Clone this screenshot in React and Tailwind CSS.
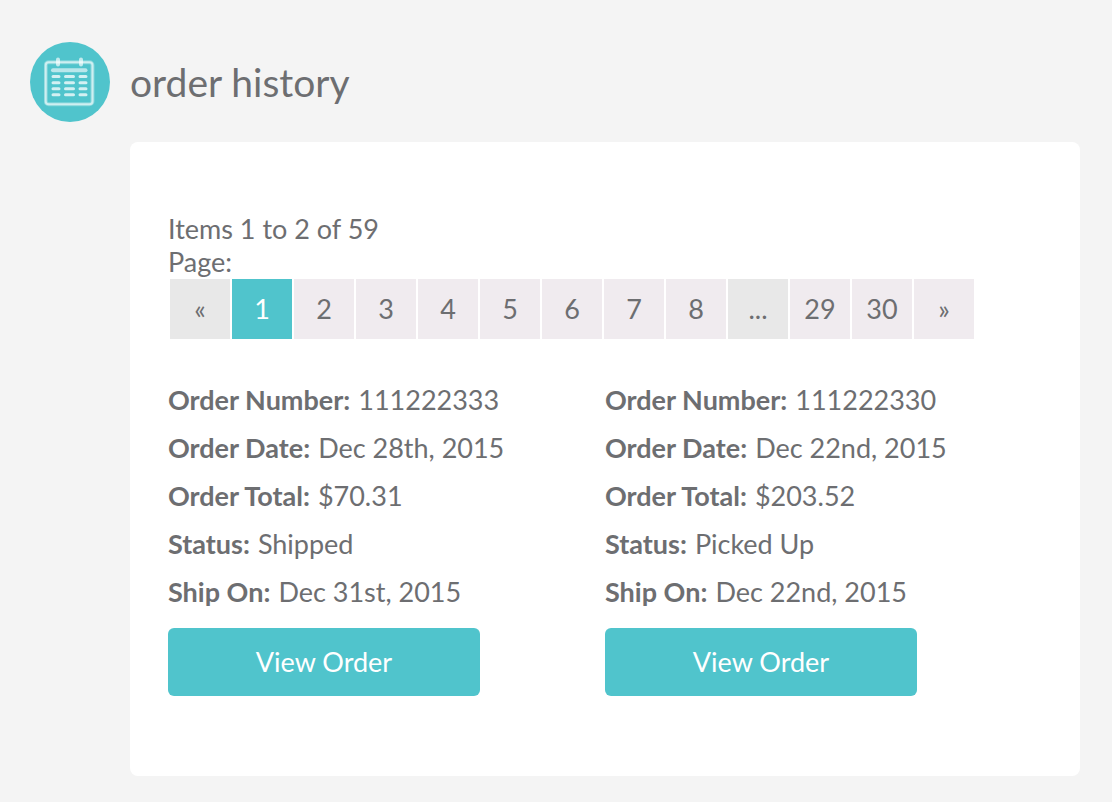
const pages = ["«", "1", "2", "3", "4", "5", "6", "7", "8", "...", "29", "30", "»"];

const orders = [
  {
    number: "111222333",
    date: "Dec 28th, 2015",
    total: "$70.31",
    status: "Shipped",
    shipOn: "Dec 31st, 2015",
  },
  {
    number: "111222330",
    date: "Dec 22nd, 2015",
    total: "$203.52",
    status: "Picked Up",
    shipOn: "Dec 22nd, 2015",
  },
];

const CalendarIcon = () => (
  <svg width="52" height="52" viewBox="0 0 52 52" fill="none" stroke="#ffffff" aria-hidden="true">
    <rect x="1.7" y="6.3" width="46.800" height="42" rx="3" strokeWidth="4" strokeOpacity="0.3" />
    <rect x="1.7" y="6.3" width="46.800" height="42" rx="3" strokeWidth="2" strokeOpacity="0.6" />
    <g strokeLinecap="round">
      <path d="M14 3.500v5M37 3.500v5" strokeWidth="4" strokeOpacity="0.65" />
      <path d="M9 14.300h32.500" strokeWidth="4" strokeOpacity="0.6" />
      <path
        d="M9 20.500h6M21.500 20.500h8M36 20.500h6M9 26.700h6M21.500 26.700h8M36 26.700h6M9 32.700h6M21.500 32.700h8M36 32.700h6M9 38.700h6M21.500 38.700h8M36 38.700h6"
        strokeWidth="3"
        strokeOpacity="0.75"
      />
    </g>
  </svg>
);

function PageButton({ page }) {
  let color = "bg-[#f0ebef]";
  if (page === "1") color = "bg-[#50c4cc] text-white";
  if (page === "«" || page === "...") color = "bg-[#e8e8e8]";

  return (
    <button
      type="button"
      aria-current={page === "1" ? "page" : undefined}
      disabled={page === "«" || page === "..."}
      className={`h-15 w-15 ${color}`}
    >
      {page}
    </button>
  );
}

function Order({ order }) {
  const rows = [
    ["Order Number:", order.number],
    ["Order Date:", order.date],
    ["Order Total:", order.total],
    ["Status:", order.status],
    ["Ship On:", order.shipOn],
  ];

  return (
    <div>
      <dl className="leading-12">
        {rows.map(([label, value]) => (
          <div key={label} className="flex gap-2">
            <dt className="font-bold">{label}</dt>
            <dd>{value}</dd>
          </div>
        ))}
      </dl>
      <button type="button" className="mt-3 h-17 w-78 rounded-md bg-[#50c4cc] text-white">
        View Order
      </button>
    </div>
  );
}

export default function App() {
  return (
    <main className="min-h-screen bg-[#f4f4f4] pt-[42px] pr-8 pb-6 pl-[30px] font-['Lato',sans-serif] text-[27px] text-[#6d6e71]">
      <header className="flex items-center gap-5">
        <div className="flex h-20 w-20 items-center justify-center rounded-full bg-[#50c4cc]">
          <CalendarIcon />
        </div>
        <h1 className="text-[39px]">order history</h1>
      </header>

      <section className="mt-5 ml-[100px] rounded-lg bg-white px-[38px] pt-[70px] pb-20">
        <p className="leading-[33px]">Items 1 to 2 of 59</p>
        <p className="leading-[33px]">Page:</p>
        <nav aria-label="Pagination" className="mt-px flex flex-wrap gap-0.5 pl-0.5">
          {pages.map((page) => (
            <PageButton key={page} page={page} />
          ))}
        </nav>
        <div className="mt-[37px] grid grid-cols-2">
          {orders.map((order) => (
            <Order key={order.number} order={order} />
          ))}
        </div>
      </section>
    </main>
  );
}
